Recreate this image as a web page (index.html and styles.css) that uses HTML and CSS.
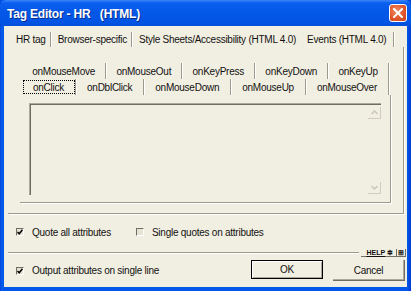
FILE: index.html
```html
<!DOCTYPE html>
<html>
<head>
<meta charset="utf-8">
<link rel="stylesheet" href="styles.css">
</head>
<body>
<div class="window">
  <div class="titlebar">
    <span class="title">Tag Editor - HR&nbsp;&nbsp;&nbsp;(HTML)</span>
    <span class="close"><svg width="10" height="10" viewBox="0 0 10 10"><path d="M1 1 L9 9 M9 1 L1 9" stroke="#fff" stroke-width="2" stroke-linecap="square"/></svg></span>
  </div>
  <div class="client">
    <div class="tabs outer-tabs">
      <span class="tab">HR tag</span>
      <span class="tab">Browser-specific</span>
      <span class="tab tab-open">Style Sheets/Accessibility (HTML 4.0)</span>
      <span class="tab tab-last">Events (HTML 4.0)</span>
    </div>
    <div class="panel outer-panel">
      <div class="tabs inner-tabs">
        <span class="tab">onMouseMove</span>
        <span class="tab">onMouseOut</span>
        <span class="tab">onKeyPress</span>
        <span class="tab">onKeyDown</span>
        <span class="tab">onKeyUp</span>
      </div>
      <div class="tabs inner-tabs">
        <span class="tab tab-focus">onClick</span>
        <span class="tab">onDblClick</span>
        <span class="tab">onMouseDown</span>
        <span class="tab">onMouseUp</span>
        <span class="tab">onMouseOver</span>
      </div>
      <div class="panel inner-panel">
        <div class="textbox">
          <div class="scroll">
            <span class="arrow"><svg width="7" height="5" viewBox="0 0 7 5"><path d="M0.5 4 L3.5 1 L6.5 4" fill="none" stroke="#c9c6b6" stroke-width="1.4"/></svg></span>
            <span class="arrow"><svg width="7" height="5" viewBox="0 0 7 5"><path d="M0.5 1 L3.5 4 L6.5 1" fill="none" stroke="#c9c6b6" stroke-width="1.4"/></svg></span>
          </div>
        </div>
      </div>
    </div>
    <div class="options">
      <label class="check"><span class="box"><svg width="6" height="6" viewBox="0 0 6 6"><path d="M0.5 3 L2.2 4.8 L5.5 0.8" fill="none" stroke="#000" stroke-width="1.5"/></svg></span>Quote all attributes</label>
      <label class="check check-second"><span class="box"></span>Single quotes on attributes</label>
    </div>
    <div class="divider">
      <span class="rule"></span>
      <span class="help"><u>HELP</u> &#8785;</span>
      <span class="help help-icon">&#8862;</span>
    </div>
    <div class="footer">
      <label class="check"><span class="box"><svg width="6" height="6" viewBox="0 0 6 6"><path d="M0.5 3 L2.2 4.8 L5.5 0.8" fill="none" stroke="#000" stroke-width="1.5"/></svg></span>Output attributes on single line</label>
      <span class="spacer"></span>
      <span class="button button-default">OK</span>
      <span class="button">Cancel</span>
    </div>
  </div>
</div>
</body>
</html>
```

FILE: styles.css
```css
html, body {
  margin: 0;
  padding: 0;
  background: #0055e5;
}

.window {
  width: 411px;
  height: 291px;
  box-sizing: border-box;
  display: flex;
  flex-direction: column;
  background: linear-gradient(90deg, #0036c8 0, #0a5ef0 1px, #0058ea 3px, #0058ea 407px, #0040d8 410px);
  font-family: "Liberation Sans", Arial, sans-serif;
  font-size: 10px;
  letter-spacing: -0.25px;
  color: #111;
}

.titlebar {
  height: 26px;
  flex: none;
  display: flex;
  align-items: flex-start;
  justify-content: space-between;
  background: linear-gradient(180deg, #3c85f5 0, #0a5ff0 3px, #0458e8 12px, #0254e4 22px, #0050dc 26px);
  border-radius: 6px 6px 0 0;
}

.title {
  margin: 7px 0 0 7px;
  color: #fff;
  font-weight: bold;
  font-size: 12px;
  letter-spacing: -0.2px;
  line-height: 14px;
  text-shadow: 1px 1px 0 #0a2d8a;
  white-space: pre;
}

.close {
  width: 18px;
  height: 18px;
  margin: 4px 4px 0 0;
  box-sizing: border-box;
  border: 1px solid #fff;
  border-radius: 3px;
  background: radial-gradient(circle at 40% 35%, #f08a62 0, #e2582c 55%, #c8401c 100%);
  display: flex;
  align-items: center;
  justify-content: center;
}

.client {
  flex: 1;
  margin: 0 4px 4px 4px;
  padding: 0 3px 0 4px;
  background: #f1efe2;
  display: flex;
  flex-direction: column;
}

.tabs {
  display: flex;
  white-space: nowrap;
}

.tab {
  display: flex;
  align-items: center;
  border-right: 1px solid #9d9a8c;
  box-shadow: 1px 0 0 #fff;
}

.outer-tabs {
  height: 15px;
  margin-top: 6px;
}

.outer-tabs .tab {
  padding: 0 4px 0 7px;
}

.outer-tabs .tab:first-child {
  padding-left: 8px;
}

.outer-tabs .tab-open {
  border-right-color: transparent;
  box-shadow: none;
  padding-right: 3px;
}

.outer-tabs .tab-last {
  padding-right: 7px;
}

.panel {
  box-sizing: border-box;
  border-right: 1px solid #9d9a8c;
  border-bottom: 1px solid #9d9a8c;
  box-shadow: 1px 1px 0 #fff;
}

.outer-panel {
  height: 167px;
  padding: 16px 12px 10px 12px;
  display: flex;
  flex-direction: column;
}

.inner-tabs {
  height: 16px;
  margin: 0 2px;
}

.inner-tabs .tab {
  flex: 1 1 auto;
  justify-content: center;
  padding: 0 1px;
}

.tab-focus {
  outline: 1px dotted #000;
  outline-offset: -2px;
}

.inner-panel {
  flex: 1;
  padding: 8px 9px 7px 9px;
  display: flex;
}

.textbox {
  flex: 1;
  box-sizing: border-box;
  border-top: 1px solid #aca899;
  border-left: 1px solid #aca899;
  box-shadow: inset 1px 1px 0 #6f6d62;
  display: flex;
  justify-content: flex-end;
}

.scroll {
  width: 13px;
  display: flex;
  flex-direction: column;
  justify-content: space-between;
  padding: 3px 0 1px 0;
}

.arrow {
  height: 12px;
  box-sizing: border-box;
  border-right: 1px solid #cfccbd;
  border-bottom: 1px solid #cfccbd;
  display: flex;
  align-items: center;
  justify-content: center;
}

.options {
  height: 14px;
  margin-top: 11px;
  display: flex;
  align-items: center;
}

.check {
  display: flex;
  align-items: center;
  padding-left: 8px;
  white-space: nowrap;
}

.check-second {
  padding-left: 25px;
}

.box {
  width: 8px;
  height: 8px;
  box-sizing: border-box;
  margin-right: 8px;
  border-top: 1px solid #6f6d62;
  border-left: 1px solid #6f6d62;
  border-right: 1px solid #fff;
  border-bottom: 1px solid #fff;
  background: #e6e3d4;
  display: flex;
  align-items: center;
  justify-content: center;
}

.divider {
  height: 8px;
  margin-top: 10px;
  display: flex;
  align-items: center;
}

.rule {
  flex: 1;
  height: 0;
  border-top: 1px solid #9d9a8c;
  border-bottom: 1px solid #fff;
  margin-right: 2px;
}

.help {
  height: 8px;
  box-sizing: border-box;
  padding: 0 3px 0 6px;
  font-size: 7px;
  font-weight: bold;
  line-height: 7px;
  letter-spacing: 0;
  border-right: 1px solid #716f64;
  border-bottom: 1px solid #716f64;
  white-space: nowrap;
}

.help-icon {
  padding: 0 1px;
  margin-right: -2px;
}

.footer {
  height: 21px;
  margin-top: 3px;
  display: flex;
  align-items: center;
}

.spacer {
  flex: 1;
}

.button {
  width: 72px;
  height: 21px;
  box-sizing: border-box;
  display: flex;
  align-items: center;
  justify-content: center;
  border-right: 1px solid #716f64;
  border-bottom: 1px solid #716f64;
  box-shadow: inset -1px -1px 0 #aca899;
  margin-right: -1px;
}

.button-default {
  height: 19px;
  align-self: flex-start;
  border: 1px solid #000;
  box-shadow: inset 1px 1px 0 #fff, inset -1px -1px 0 #aca899;
  margin-right: 10px;
}
```
